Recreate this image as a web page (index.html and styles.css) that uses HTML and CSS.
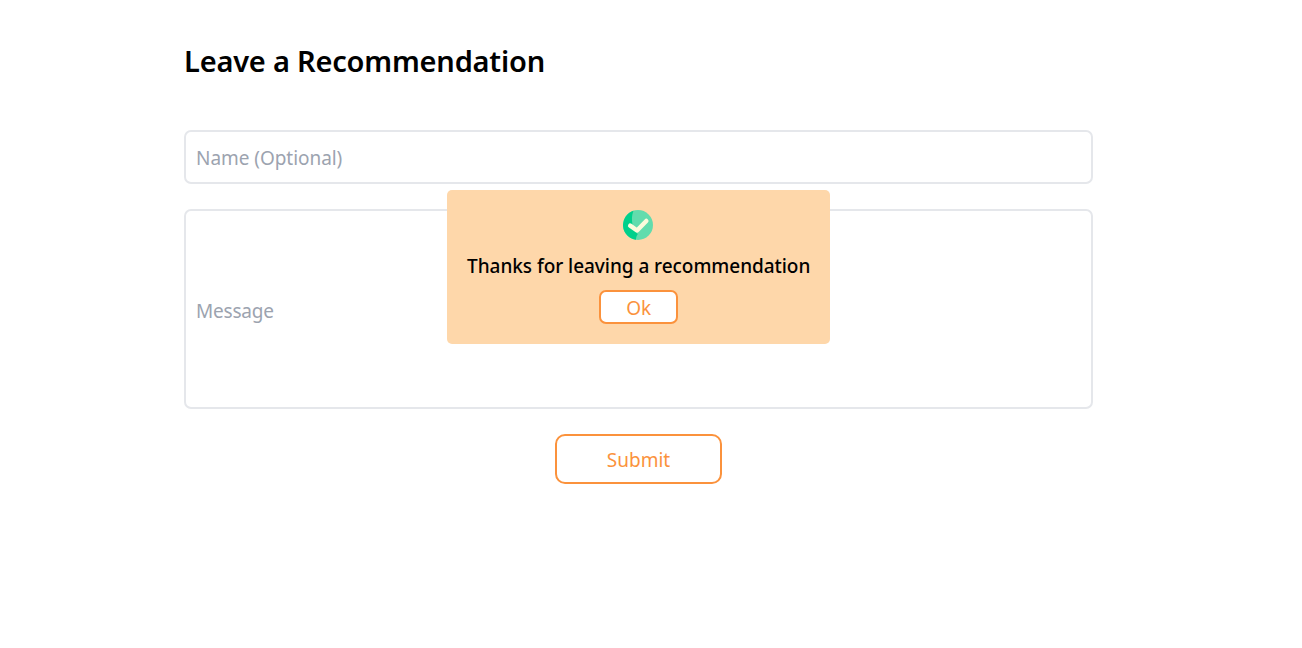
FILE: index.html
```html
<!DOCTYPE html>
<html lang="en">
<head>
<meta charset="utf-8">
<title>Leave a Recommendation</title>
<link rel="stylesheet" href="styles.css">
</head>
<body>
<main class="page">
  <h1 class="title">Leave a Recommendation</h1>
  <form class="form">
    <input class="field name" type="text" placeholder="Name (Optional)">
    <input class="field message" type="text" placeholder="Message">
    <button class="submit" type="button">Submit</button>
  </form>
  <div class="popup" role="dialog">
    <svg class="check" viewBox="0 0 30 30">
      <circle cx="15" cy="15" r="15" fill="#62dcad"/>
      <path d="M10.500 .69A15 15 0 0 0 13 29.870C13 27.500 13.500 26 14.800 24C9.500 19 7.200 9 10.500 .69z" fill="#00d08b"/>
      <path d="M7.200 15.700L14 20.500L23.300 11" fill="none" stroke="#fdfbdc" stroke-width="4.500" stroke-linecap="round" stroke-linejoin="round"/>
    </svg>
    <p class="thanks">Thanks for leaving a recommendation</p>
    <button class="ok" type="button">Ok</button>
  </div>
</main>
</body>
</html>
```
FILE: styles.css
```css
* { box-sizing: border-box; }
body { margin: 0; background: #fff; font-family: "Noto Sans", "Open Sans", sans-serif; }
.page { position: relative; width: 909px; margin: 0 0 0 184px; padding-top: 39px; }
.title { margin: 0 0 47px; font-size: 29px; line-height: 44px; font-weight: 600; letter-spacing: -0.2px; white-space: nowrap; }
.form { display: flex; flex-direction: column; align-items: center; gap: 25px; }
.field { width: 100%; border: 2px solid #e5e7eb; border-radius: 7px; padding: 0 10px; background: #fff; font-family: inherit; font-size: 19px; letter-spacing: 0; outline: none; }
.field::placeholder { color: #9ca3af; opacity: 1; }
.name { height: 54px; padding-top: 1px; letter-spacing: -0.05px; }
.message { height: 200px; padding-top: 3px; letter-spacing: -0.2px; }
button { font-family: inherit; font-size: 19px; color: #fb923c; background: #fff; border: 2px solid #fb923c; padding: 2px 0 0; }
.submit { width: 167px; height: 50px; border-radius: 10px; }
.popup { position: absolute; left: 263px; top: 190px; width: 383.400px; height: 154px; padding-top: 20px; background: #fed7aa; border-radius: 5px; display: flex; flex-direction: column; align-items: center; }
.check { width: 30px; height: 30px; margin-right: 1px; }
.thanks { margin: 12px 0 10px; font-size: 19px; line-height: 28px; font-weight: 500; letter-spacing: -0.05px; white-space: nowrap; }
.ok { width: 79px; height: 34px; border-radius: 7px; }
```
